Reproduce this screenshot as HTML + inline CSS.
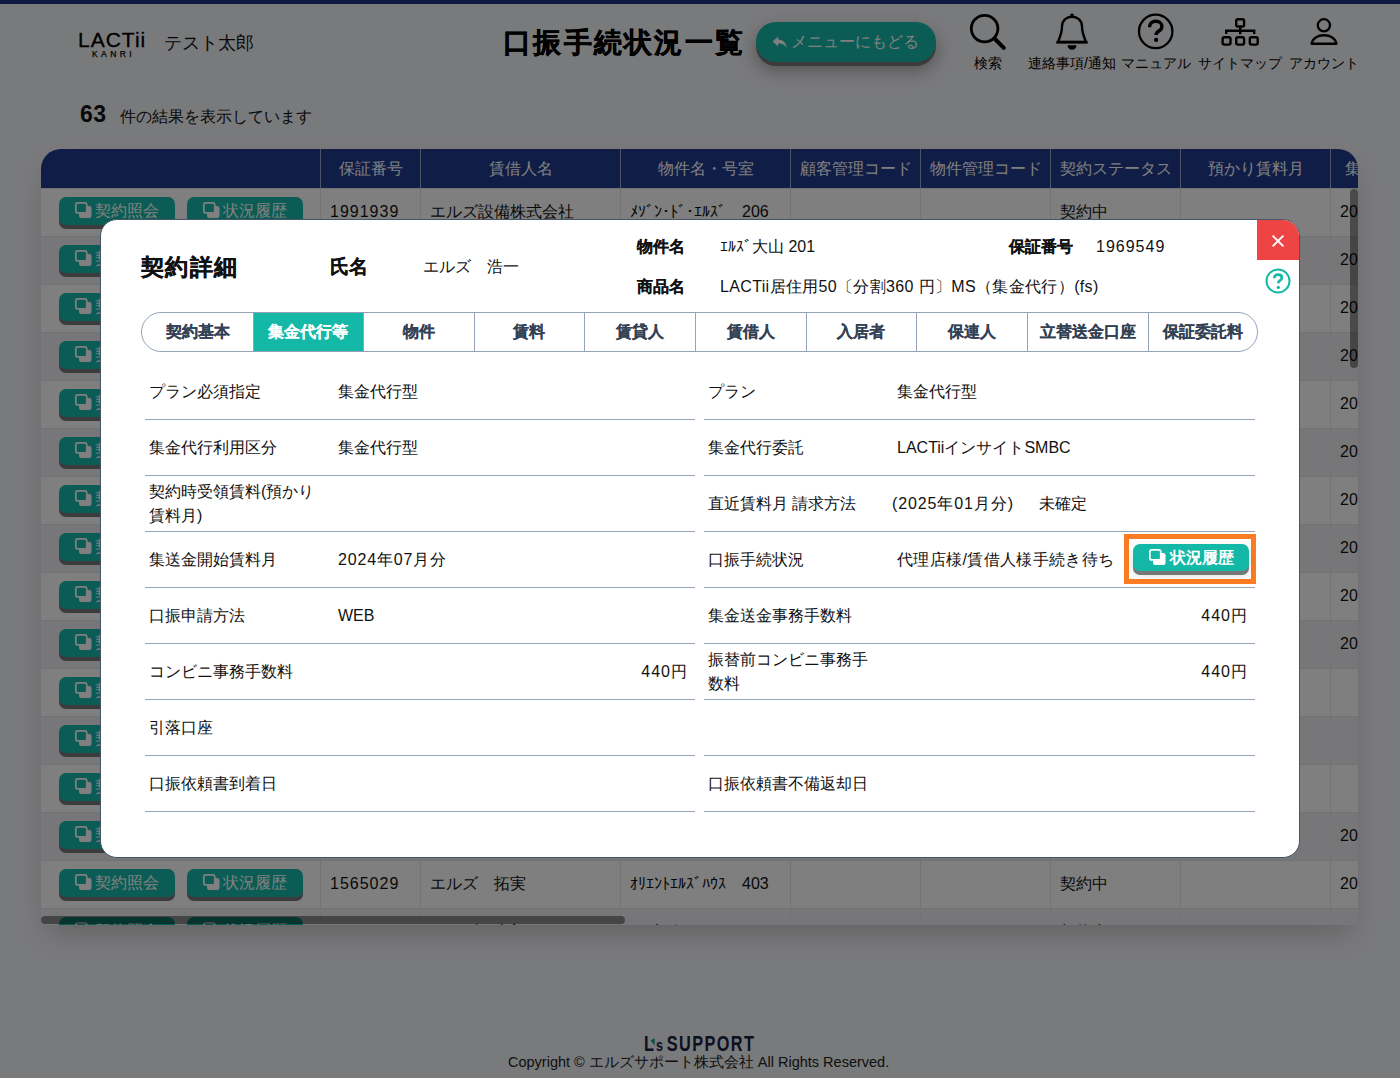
<!DOCTYPE html>
<html lang="ja">
<head>
<meta charset="utf-8">
<style>
*{box-sizing:border-box;margin:0;padding:0}
html,body{width:1400px;height:1078px;overflow:hidden}
body{font-family:"Liberation Sans",sans-serif;background:#f3f4f7;color:#111;position:relative;font-size:16px}
.abs{position:absolute;white-space:nowrap}
.topbar{position:absolute;left:0;top:0;width:1400px;height:4px;background:#1d347f}
.logo{left:78px;top:27px;font-size:21px;letter-spacing:1px;color:#000;line-height:26px;-webkit-text-stroke:.3px #000}
.logo2{left:92px;top:49px;font-size:8.5px;letter-spacing:3.4px;color:#000;line-height:10px;-webkit-text-stroke:.25px #000}
.uname{left:164px;top:31px;font-size:18px;line-height:24px}
.title{left:503px;top:24px;font-size:28px;letter-spacing:2.3px;font-weight:bold;line-height:38px;-webkit-text-stroke:.4px #000}
.backbtn{left:756px;top:22px;width:180px;height:40px;border-radius:20px;background:#15b9a8;color:#fff;box-shadow:0 4px 0 #777,0 8px 18px rgba(0,0,0,.35);font-size:16px;line-height:40px;padding-left:35px}
.hicon{position:absolute;top:12px;text-align:center;font-size:13.5px;line-height:16px;color:#000}
.hicon svg{display:block;margin:0 auto}
.hl{top:54px;font-size:14px;line-height:18px;text-align:center;color:#000}
.count{left:80px;top:99px;font-size:16px;line-height:30px}
.count b{font-size:23px;margin-right:9px;letter-spacing:.5px}
.twrap{position:absolute;left:41px;top:149px;width:1317px;height:776px;background:#fff;border-radius:20px 20px 0 0;overflow:hidden;box-shadow:0 14px 30px -8px rgba(0,0,0,.22);z-index:1}
.thead{position:absolute;left:0;top:0;width:1317px;height:39px;background:#1f3a8f;z-index:2}
.vscroll{position:absolute;left:1309px;top:40px;width:8px;height:179px;border-radius:4px;background:rgba(0,0,0,.42);z-index:3}
.hscroll{position:absolute;left:0;top:767px;width:584px;height:8px;border-radius:4px;background:rgba(0,0,0,.42);z-index:3}
.gbtn .ic{position:absolute;left:16px;top:5px}
.th{position:absolute;top:0;height:39px;line-height:39px;color:#fff;text-align:center;font-size:16px;border-left:1px solid #9aa6c8;overflow:hidden;white-space:nowrap}
.row{position:absolute;left:0;width:1317px;height:48px;background:#fff;border-top:1px solid #e3e4e8}
.row.alt{background:#eeeff2}
.cell.dg{letter-spacing:1px}
.cell{position:absolute;top:-1px;height:48px;line-height:48px;font-size:16px;border-left:1px solid #e6e6e6;padding-left:9px;white-space:nowrap;overflow:hidden}
.gbtn{position:absolute;top:8px;width:116px;height:28px;border-radius:7px;background:#15b9a8;color:#fff;box-shadow:0 4px 0 #777;font-size:16px;line-height:28px;padding-left:36px;white-space:nowrap}
.overlay{z-index:10;position:absolute;left:0;top:0;width:1400px;height:1078px;background:rgba(0,0,0,.5)}
.footer-logo{left:644px;top:1031px;font-size:22px;font-weight:bold;color:#1a2142;line-height:25px;transform:scaleX(.74);transform-origin:0 0;letter-spacing:1.9px}
.fl2{display:inline-block;width:0;height:0;border-left:3px solid transparent;border-right:3px solid transparent;border-top:7px solid #169e8c;position:relative;top:-5px;margin:0 0 0 -5px;transform:rotate(-20deg)}
.fl3{font-size:17px;margin-right:3px}
.copy{left:508px;top:1052px;font-size:14.5px;line-height:20px;color:#222}

.modal{position:absolute;left:100px;top:219px;width:1200px;height:639px;background:#fff;border:1px solid #475569;border-radius:17px;z-index:20;overflow:hidden}
.m{color:#111;white-space:nowrap}
.mt{font-size:23px;letter-spacing:1.3px;font-weight:bold;line-height:30px;-webkit-text-stroke:.3px #111}
.mh{font-size:19px;font-weight:bold;line-height:24px;-webkit-text-stroke:.2px #111}
.mv{font-size:16px;line-height:24px}
.mb{font-size:16px;font-weight:bold;line-height:24px;-webkit-text-stroke:.15px #111}
.close{position:absolute;right:0;top:0;width:42px;height:40px;background:#ef4444;display:flex;align-items:center;justify-content:center}
.help{position:absolute;width:26px;height:26px}
.help svg{display:block}
.tabs{position:absolute;height:40px;border:1px solid #94a3b8;border-radius:20px;overflow:hidden}
.tab{position:absolute;top:0;margin-left:-1px;height:38px;line-height:38px;text-align:center;font-size:16px;font-weight:bold;color:#334155;-webkit-text-stroke:.15px currentColor;border-left:1px solid #94a3b8}
.tab.first{border-left:none;margin-left:0}
.tab.on{background:#14b8a6;color:#fff}
.grow{position:absolute;height:56px;border-bottom:1px solid #94a3b8}
.gl{font-size:16px;line-height:24px}
.gl2{font-size:16px;line-height:24px;white-space:nowrap}
.obox{position:absolute;width:132px;height:50px;border:5px solid #fb7c23}
.mbtn{position:absolute;width:116px;height:27px;border-radius:7px;background:#14b8a6;color:#fff;box-shadow:0 4px 0 #777,0 4px 10px rgba(0,0,0,.15);font-size:16px;line-height:27px;padding-left:36.5px;white-space:nowrap;font-weight:bold}
.mbtn .ic{position:absolute;left:16px;top:5px}
</style>
</head>
<body>
<div class="topbar"></div>
<div class="abs logo">LACTii</div>
<div class="abs logo2">KANRI</div>
<div class="abs uname">テスト太郎</div>
<div class="abs title">口振手続状況一覧</div>
<div class="abs backbtn"><svg style="position:absolute;left:16px;top:14px" width="16" height="13" viewBox="0 0 16 13"><path d="M6.2 0.6L0.6 5.6L6.2 10.6V7.6C10.2 7.6 12.6 8.6 14.8 12.2C14.2 7.2 11.6 3.6 6.2 3.6Z" fill="#fff"/></svg>メニューにもどる</div>


<svg class="abs" style="left:960px;top:6px" width="60" height="50" viewBox="960 6 60 50"><circle cx="984.6" cy="28.6" r="13.3" fill="none" stroke="#000" stroke-width="2.8"/><path d="M994.5 38.5L1003.8 47.8" stroke="#000" stroke-width="4" stroke-linecap="round"/></svg>
<svg class="abs" style="left:1050px;top:6px" width="45" height="50" viewBox="1050 6 45 50"><path d="M1058 42C1060.5 36 1062 31 1062 26.5C1062 20.5 1066.5 16.8 1072 16.8C1077.5 16.8 1082 20.5 1082 26.5C1082 31 1083.5 36 1086 42Z" fill="none" stroke="#000" stroke-width="2.4" stroke-linejoin="miter"/><path d="M1056.5 42.2H1087.5" stroke="#000" stroke-width="2.6"/><circle cx="1072" cy="15.6" r="2" fill="#000"/><path d="M1067.5 45.3H1076.5A4.5 4.5 0 0 1 1067.5 45.3Z" fill="#000"/></svg>
<svg class="abs" style="left:1130px;top:6px" width="52" height="52" viewBox="1130 6 52 52"><circle cx="1155.7" cy="31.4" r="16.7" fill="none" stroke="#000" stroke-width="2.3"/><path d="M1149.6 27.2C1149.6 23.3 1152.2 21.3 1155.8 21.3C1159.4 21.3 1161.9 23.4 1161.9 26.4C1161.9 28.9 1160.5 30.1 1158.6 31.3C1157 32.3 1156.1 33 1156.1 35" fill="none" stroke="#000" stroke-width="3.4"/><circle cx="1156.1" cy="39.9" r="2.1" fill="#000"/></svg>
<svg class="abs" style="left:1215px;top:10px" width="50" height="42" viewBox="1215 10 50 42"><g fill="none" stroke="#000" stroke-width="2.4"><rect x="1236.2" y="19.2" width="7.9" height="7.3" rx="1.8"/><rect x="1222.6" y="37.2" width="7.9" height="7.4" rx="1.8"/><rect x="1236.2" y="37.2" width="7.9" height="7.4" rx="1.8"/><rect x="1249.8" y="37.2" width="7.9" height="7.4" rx="1.8"/><path d="M1240.2 26.5V34.2M1226.2 34V30.8H1254.2V34"/></g></svg>
<svg class="abs" style="left:1305px;top:12px" width="40" height="40" viewBox="1305 12 40 40"><circle cx="1323.9" cy="25.3" r="6.1" fill="none" stroke="#000" stroke-width="2.3"/><path d="M1311.6 43.8C1312.6 38.4 1317.6 35.2 1324 35.2C1330.4 35.2 1335.4 38.4 1336.4 43.8Z" fill="none" stroke="#000" stroke-width="2.4" stroke-linejoin="round"/></svg>
<div class="abs hl" style="left:948px;width:80px">検索</div>
<div class="abs hl" style="left:1022px;width:100px">連絡事項/通知</div>
<div class="abs hl" style="left:1106px;width:100px">マニュアル</div>
<div class="abs hl" style="left:1190px;width:100px">サイトマップ</div>
<div class="abs hl" style="left:1274px;width:100px">アカウント</div>

<div class="abs count"><b>63</b> 件の結果を表示しています</div>

<div class="twrap">
  <div class="thead">
<div class="th" style="left:279px;width:100px">保証番号</div>
<div class="th" style="left:379px;width:200px">賃借人名</div>
<div class="th" style="left:579px;width:170px">物件名・号室</div>
<div class="th" style="left:749px;width:130px">顧客管理コード</div>
<div class="th" style="left:879px;width:130px">物件管理コード</div>
<div class="th" style="left:1009px;width:130px">契約ステータス</div>
<div class="th" style="left:1139px;width:150px">預かり賃料月</div>
<div class="th" style="left:1289px;width:60px">集金</div>
</div>
<div class="row" style="top:39px">
<div class="gbtn" style="left:18px"><svg class="ic" width="18" height="18" viewBox="0 0 18 18"><rect x="4" y="4" width="12.5" height="12" rx="2.2" fill="#fff"/><rect x="0.85" y="0.85" width="10.9" height="10.1" rx="2" fill="#15b9a8" stroke="#fff" stroke-width="1.7"/></svg>契約照会</div>
<div class="gbtn" style="left:146px"><svg class="ic" width="18" height="18" viewBox="0 0 18 18"><rect x="4" y="4" width="12.5" height="12" rx="2.2" fill="#fff"/><rect x="0.85" y="0.85" width="10.9" height="10.1" rx="2" fill="#15b9a8" stroke="#fff" stroke-width="1.7"/></svg>状況履歴</div>
<div class="cell dg" style="left:279px;width:100px">1991939</div>
<div class="cell" style="left:379px;width:200px">エルズ設備株式会社</div>
<div class="cell hk" style="left:579px;width:170px">ﾒｿﾞﾝ･ﾄﾞ･ｴﾙｽﾞ　206</div>
<div class="cell" style="left:749px;width:130px"></div>
<div class="cell" style="left:879px;width:130px"></div>
<div class="cell" style="left:1009px;width:130px">契約中</div>
<div class="cell" style="left:1139px;width:150px"></div>
<div class="cell" style="left:1289px;width:60px">20</div>
</div>
<div class="row alt" style="top:87px">
<div class="gbtn" style="left:18px"><svg class="ic" width="18" height="18" viewBox="0 0 18 18"><rect x="4" y="4" width="12.5" height="12" rx="2.2" fill="#fff"/><rect x="0.85" y="0.85" width="10.9" height="10.1" rx="2" fill="#15b9a8" stroke="#fff" stroke-width="1.7"/></svg>契約照会</div>
<div class="gbtn" style="left:146px"><svg class="ic" width="18" height="18" viewBox="0 0 18 18"><rect x="4" y="4" width="12.5" height="12" rx="2.2" fill="#fff"/><rect x="0.85" y="0.85" width="10.9" height="10.1" rx="2" fill="#15b9a8" stroke="#fff" stroke-width="1.7"/></svg>状況履歴</div>
<div class="cell dg" style="left:279px;width:100px"></div>
<div class="cell" style="left:379px;width:200px"></div>
<div class="cell hk" style="left:579px;width:170px"></div>
<div class="cell" style="left:749px;width:130px"></div>
<div class="cell" style="left:879px;width:130px"></div>
<div class="cell" style="left:1009px;width:130px"></div>
<div class="cell" style="left:1139px;width:150px"></div>
<div class="cell" style="left:1289px;width:60px">20</div>
</div>
<div class="row" style="top:135px">
<div class="gbtn" style="left:18px"><svg class="ic" width="18" height="18" viewBox="0 0 18 18"><rect x="4" y="4" width="12.5" height="12" rx="2.2" fill="#fff"/><rect x="0.85" y="0.85" width="10.9" height="10.1" rx="2" fill="#15b9a8" stroke="#fff" stroke-width="1.7"/></svg>契約照会</div>
<div class="gbtn" style="left:146px"><svg class="ic" width="18" height="18" viewBox="0 0 18 18"><rect x="4" y="4" width="12.5" height="12" rx="2.2" fill="#fff"/><rect x="0.85" y="0.85" width="10.9" height="10.1" rx="2" fill="#15b9a8" stroke="#fff" stroke-width="1.7"/></svg>状況履歴</div>
<div class="cell dg" style="left:279px;width:100px"></div>
<div class="cell" style="left:379px;width:200px"></div>
<div class="cell hk" style="left:579px;width:170px"></div>
<div class="cell" style="left:749px;width:130px"></div>
<div class="cell" style="left:879px;width:130px"></div>
<div class="cell" style="left:1009px;width:130px"></div>
<div class="cell" style="left:1139px;width:150px"></div>
<div class="cell" style="left:1289px;width:60px">20</div>
</div>
<div class="row alt" style="top:183px">
<div class="gbtn" style="left:18px"><svg class="ic" width="18" height="18" viewBox="0 0 18 18"><rect x="4" y="4" width="12.5" height="12" rx="2.2" fill="#fff"/><rect x="0.85" y="0.85" width="10.9" height="10.1" rx="2" fill="#15b9a8" stroke="#fff" stroke-width="1.7"/></svg>契約照会</div>
<div class="gbtn" style="left:146px"><svg class="ic" width="18" height="18" viewBox="0 0 18 18"><rect x="4" y="4" width="12.5" height="12" rx="2.2" fill="#fff"/><rect x="0.85" y="0.85" width="10.9" height="10.1" rx="2" fill="#15b9a8" stroke="#fff" stroke-width="1.7"/></svg>状況履歴</div>
<div class="cell dg" style="left:279px;width:100px"></div>
<div class="cell" style="left:379px;width:200px"></div>
<div class="cell hk" style="left:579px;width:170px"></div>
<div class="cell" style="left:749px;width:130px"></div>
<div class="cell" style="left:879px;width:130px"></div>
<div class="cell" style="left:1009px;width:130px"></div>
<div class="cell" style="left:1139px;width:150px"></div>
<div class="cell" style="left:1289px;width:60px">20</div>
</div>
<div class="row" style="top:231px">
<div class="gbtn" style="left:18px"><svg class="ic" width="18" height="18" viewBox="0 0 18 18"><rect x="4" y="4" width="12.5" height="12" rx="2.2" fill="#fff"/><rect x="0.85" y="0.85" width="10.9" height="10.1" rx="2" fill="#15b9a8" stroke="#fff" stroke-width="1.7"/></svg>契約照会</div>
<div class="gbtn" style="left:146px"><svg class="ic" width="18" height="18" viewBox="0 0 18 18"><rect x="4" y="4" width="12.5" height="12" rx="2.2" fill="#fff"/><rect x="0.85" y="0.85" width="10.9" height="10.1" rx="2" fill="#15b9a8" stroke="#fff" stroke-width="1.7"/></svg>状況履歴</div>
<div class="cell dg" style="left:279px;width:100px"></div>
<div class="cell" style="left:379px;width:200px"></div>
<div class="cell hk" style="left:579px;width:170px"></div>
<div class="cell" style="left:749px;width:130px"></div>
<div class="cell" style="left:879px;width:130px"></div>
<div class="cell" style="left:1009px;width:130px"></div>
<div class="cell" style="left:1139px;width:150px"></div>
<div class="cell" style="left:1289px;width:60px">20</div>
</div>
<div class="row alt" style="top:279px">
<div class="gbtn" style="left:18px"><svg class="ic" width="18" height="18" viewBox="0 0 18 18"><rect x="4" y="4" width="12.5" height="12" rx="2.2" fill="#fff"/><rect x="0.85" y="0.85" width="10.9" height="10.1" rx="2" fill="#15b9a8" stroke="#fff" stroke-width="1.7"/></svg>契約照会</div>
<div class="gbtn" style="left:146px"><svg class="ic" width="18" height="18" viewBox="0 0 18 18"><rect x="4" y="4" width="12.5" height="12" rx="2.2" fill="#fff"/><rect x="0.85" y="0.85" width="10.9" height="10.1" rx="2" fill="#15b9a8" stroke="#fff" stroke-width="1.7"/></svg>状況履歴</div>
<div class="cell dg" style="left:279px;width:100px"></div>
<div class="cell" style="left:379px;width:200px"></div>
<div class="cell hk" style="left:579px;width:170px"></div>
<div class="cell" style="left:749px;width:130px"></div>
<div class="cell" style="left:879px;width:130px"></div>
<div class="cell" style="left:1009px;width:130px"></div>
<div class="cell" style="left:1139px;width:150px"></div>
<div class="cell" style="left:1289px;width:60px">20</div>
</div>
<div class="row" style="top:327px">
<div class="gbtn" style="left:18px"><svg class="ic" width="18" height="18" viewBox="0 0 18 18"><rect x="4" y="4" width="12.5" height="12" rx="2.2" fill="#fff"/><rect x="0.85" y="0.85" width="10.9" height="10.1" rx="2" fill="#15b9a8" stroke="#fff" stroke-width="1.7"/></svg>契約照会</div>
<div class="gbtn" style="left:146px"><svg class="ic" width="18" height="18" viewBox="0 0 18 18"><rect x="4" y="4" width="12.5" height="12" rx="2.2" fill="#fff"/><rect x="0.85" y="0.85" width="10.9" height="10.1" rx="2" fill="#15b9a8" stroke="#fff" stroke-width="1.7"/></svg>状況履歴</div>
<div class="cell dg" style="left:279px;width:100px"></div>
<div class="cell" style="left:379px;width:200px"></div>
<div class="cell hk" style="left:579px;width:170px"></div>
<div class="cell" style="left:749px;width:130px"></div>
<div class="cell" style="left:879px;width:130px"></div>
<div class="cell" style="left:1009px;width:130px"></div>
<div class="cell" style="left:1139px;width:150px"></div>
<div class="cell" style="left:1289px;width:60px">20</div>
</div>
<div class="row alt" style="top:375px">
<div class="gbtn" style="left:18px"><svg class="ic" width="18" height="18" viewBox="0 0 18 18"><rect x="4" y="4" width="12.5" height="12" rx="2.2" fill="#fff"/><rect x="0.85" y="0.85" width="10.9" height="10.1" rx="2" fill="#15b9a8" stroke="#fff" stroke-width="1.7"/></svg>契約照会</div>
<div class="gbtn" style="left:146px"><svg class="ic" width="18" height="18" viewBox="0 0 18 18"><rect x="4" y="4" width="12.5" height="12" rx="2.2" fill="#fff"/><rect x="0.85" y="0.85" width="10.9" height="10.1" rx="2" fill="#15b9a8" stroke="#fff" stroke-width="1.7"/></svg>状況履歴</div>
<div class="cell dg" style="left:279px;width:100px"></div>
<div class="cell" style="left:379px;width:200px"></div>
<div class="cell hk" style="left:579px;width:170px"></div>
<div class="cell" style="left:749px;width:130px"></div>
<div class="cell" style="left:879px;width:130px"></div>
<div class="cell" style="left:1009px;width:130px"></div>
<div class="cell" style="left:1139px;width:150px"></div>
<div class="cell" style="left:1289px;width:60px">20</div>
</div>
<div class="row" style="top:423px">
<div class="gbtn" style="left:18px"><svg class="ic" width="18" height="18" viewBox="0 0 18 18"><rect x="4" y="4" width="12.5" height="12" rx="2.2" fill="#fff"/><rect x="0.85" y="0.85" width="10.9" height="10.1" rx="2" fill="#15b9a8" stroke="#fff" stroke-width="1.7"/></svg>契約照会</div>
<div class="gbtn" style="left:146px"><svg class="ic" width="18" height="18" viewBox="0 0 18 18"><rect x="4" y="4" width="12.5" height="12" rx="2.2" fill="#fff"/><rect x="0.85" y="0.85" width="10.9" height="10.1" rx="2" fill="#15b9a8" stroke="#fff" stroke-width="1.7"/></svg>状況履歴</div>
<div class="cell dg" style="left:279px;width:100px"></div>
<div class="cell" style="left:379px;width:200px"></div>
<div class="cell hk" style="left:579px;width:170px"></div>
<div class="cell" style="left:749px;width:130px"></div>
<div class="cell" style="left:879px;width:130px"></div>
<div class="cell" style="left:1009px;width:130px"></div>
<div class="cell" style="left:1139px;width:150px"></div>
<div class="cell" style="left:1289px;width:60px">20</div>
</div>
<div class="row alt" style="top:471px">
<div class="gbtn" style="left:18px"><svg class="ic" width="18" height="18" viewBox="0 0 18 18"><rect x="4" y="4" width="12.5" height="12" rx="2.2" fill="#fff"/><rect x="0.85" y="0.85" width="10.9" height="10.1" rx="2" fill="#15b9a8" stroke="#fff" stroke-width="1.7"/></svg>契約照会</div>
<div class="gbtn" style="left:146px"><svg class="ic" width="18" height="18" viewBox="0 0 18 18"><rect x="4" y="4" width="12.5" height="12" rx="2.2" fill="#fff"/><rect x="0.85" y="0.85" width="10.9" height="10.1" rx="2" fill="#15b9a8" stroke="#fff" stroke-width="1.7"/></svg>状況履歴</div>
<div class="cell dg" style="left:279px;width:100px"></div>
<div class="cell" style="left:379px;width:200px"></div>
<div class="cell hk" style="left:579px;width:170px"></div>
<div class="cell" style="left:749px;width:130px"></div>
<div class="cell" style="left:879px;width:130px"></div>
<div class="cell" style="left:1009px;width:130px"></div>
<div class="cell" style="left:1139px;width:150px"></div>
<div class="cell" style="left:1289px;width:60px">20</div>
</div>
<div class="row" style="top:519px">
<div class="gbtn" style="left:18px"><svg class="ic" width="18" height="18" viewBox="0 0 18 18"><rect x="4" y="4" width="12.5" height="12" rx="2.2" fill="#fff"/><rect x="0.85" y="0.85" width="10.9" height="10.1" rx="2" fill="#15b9a8" stroke="#fff" stroke-width="1.7"/></svg>契約照会</div>
<div class="gbtn" style="left:146px"><svg class="ic" width="18" height="18" viewBox="0 0 18 18"><rect x="4" y="4" width="12.5" height="12" rx="2.2" fill="#fff"/><rect x="0.85" y="0.85" width="10.9" height="10.1" rx="2" fill="#15b9a8" stroke="#fff" stroke-width="1.7"/></svg>状況履歴</div>
<div class="cell dg" style="left:279px;width:100px"></div>
<div class="cell" style="left:379px;width:200px"></div>
<div class="cell hk" style="left:579px;width:170px"></div>
<div class="cell" style="left:749px;width:130px"></div>
<div class="cell" style="left:879px;width:130px"></div>
<div class="cell" style="left:1009px;width:130px"></div>
<div class="cell" style="left:1139px;width:150px"></div>
<div class="cell" style="left:1289px;width:60px"></div>
</div>
<div class="row alt" style="top:567px">
<div class="gbtn" style="left:18px"><svg class="ic" width="18" height="18" viewBox="0 0 18 18"><rect x="4" y="4" width="12.5" height="12" rx="2.2" fill="#fff"/><rect x="0.85" y="0.85" width="10.9" height="10.1" rx="2" fill="#15b9a8" stroke="#fff" stroke-width="1.7"/></svg>契約照会</div>
<div class="gbtn" style="left:146px"><svg class="ic" width="18" height="18" viewBox="0 0 18 18"><rect x="4" y="4" width="12.5" height="12" rx="2.2" fill="#fff"/><rect x="0.85" y="0.85" width="10.9" height="10.1" rx="2" fill="#15b9a8" stroke="#fff" stroke-width="1.7"/></svg>状況履歴</div>
<div class="cell dg" style="left:279px;width:100px"></div>
<div class="cell" style="left:379px;width:200px"></div>
<div class="cell hk" style="left:579px;width:170px"></div>
<div class="cell" style="left:749px;width:130px"></div>
<div class="cell" style="left:879px;width:130px"></div>
<div class="cell" style="left:1009px;width:130px"></div>
<div class="cell" style="left:1139px;width:150px"></div>
<div class="cell" style="left:1289px;width:60px"></div>
</div>
<div class="row" style="top:615px">
<div class="gbtn" style="left:18px"><svg class="ic" width="18" height="18" viewBox="0 0 18 18"><rect x="4" y="4" width="12.5" height="12" rx="2.2" fill="#fff"/><rect x="0.85" y="0.85" width="10.9" height="10.1" rx="2" fill="#15b9a8" stroke="#fff" stroke-width="1.7"/></svg>契約照会</div>
<div class="gbtn" style="left:146px"><svg class="ic" width="18" height="18" viewBox="0 0 18 18"><rect x="4" y="4" width="12.5" height="12" rx="2.2" fill="#fff"/><rect x="0.85" y="0.85" width="10.9" height="10.1" rx="2" fill="#15b9a8" stroke="#fff" stroke-width="1.7"/></svg>状況履歴</div>
<div class="cell dg" style="left:279px;width:100px"></div>
<div class="cell" style="left:379px;width:200px"></div>
<div class="cell hk" style="left:579px;width:170px"></div>
<div class="cell" style="left:749px;width:130px"></div>
<div class="cell" style="left:879px;width:130px"></div>
<div class="cell" style="left:1009px;width:130px"></div>
<div class="cell" style="left:1139px;width:150px"></div>
<div class="cell" style="left:1289px;width:60px"></div>
</div>
<div class="row alt" style="top:663px">
<div class="gbtn" style="left:18px"><svg class="ic" width="18" height="18" viewBox="0 0 18 18"><rect x="4" y="4" width="12.5" height="12" rx="2.2" fill="#fff"/><rect x="0.85" y="0.85" width="10.9" height="10.1" rx="2" fill="#15b9a8" stroke="#fff" stroke-width="1.7"/></svg>契約照会</div>
<div class="gbtn" style="left:146px"><svg class="ic" width="18" height="18" viewBox="0 0 18 18"><rect x="4" y="4" width="12.5" height="12" rx="2.2" fill="#fff"/><rect x="0.85" y="0.85" width="10.9" height="10.1" rx="2" fill="#15b9a8" stroke="#fff" stroke-width="1.7"/></svg>状況履歴</div>
<div class="cell dg" style="left:279px;width:100px"></div>
<div class="cell" style="left:379px;width:200px"></div>
<div class="cell hk" style="left:579px;width:170px"></div>
<div class="cell" style="left:749px;width:130px"></div>
<div class="cell" style="left:879px;width:130px"></div>
<div class="cell" style="left:1009px;width:130px"></div>
<div class="cell" style="left:1139px;width:150px"></div>
<div class="cell" style="left:1289px;width:60px">20</div>
</div>
<div class="row" style="top:711px">
<div class="gbtn" style="left:18px"><svg class="ic" width="18" height="18" viewBox="0 0 18 18"><rect x="4" y="4" width="12.5" height="12" rx="2.2" fill="#fff"/><rect x="0.85" y="0.85" width="10.9" height="10.1" rx="2" fill="#15b9a8" stroke="#fff" stroke-width="1.7"/></svg>契約照会</div>
<div class="gbtn" style="left:146px"><svg class="ic" width="18" height="18" viewBox="0 0 18 18"><rect x="4" y="4" width="12.5" height="12" rx="2.2" fill="#fff"/><rect x="0.85" y="0.85" width="10.9" height="10.1" rx="2" fill="#15b9a8" stroke="#fff" stroke-width="1.7"/></svg>状況履歴</div>
<div class="cell dg" style="left:279px;width:100px">1565029</div>
<div class="cell" style="left:379px;width:200px">エルズ　拓実</div>
<div class="cell hk" style="left:579px;width:170px">ｵﾘｴﾝﾄｴﾙｽﾞﾊｳｽ　403</div>
<div class="cell" style="left:749px;width:130px"></div>
<div class="cell" style="left:879px;width:130px"></div>
<div class="cell" style="left:1009px;width:130px">契約中</div>
<div class="cell" style="left:1139px;width:150px"></div>
<div class="cell" style="left:1289px;width:60px">20</div>
</div>
<div class="row alt" style="top:759px">
<div class="gbtn" style="left:18px"><svg class="ic" width="18" height="18" viewBox="0 0 18 18"><rect x="4" y="4" width="12.5" height="12" rx="2.2" fill="#fff"/><rect x="0.85" y="0.85" width="10.9" height="10.1" rx="2" fill="#15b9a8" stroke="#fff" stroke-width="1.7"/></svg>契約照会</div>
<div class="gbtn" style="left:146px"><svg class="ic" width="18" height="18" viewBox="0 0 18 18"><rect x="4" y="4" width="12.5" height="12" rx="2.2" fill="#fff"/><rect x="0.85" y="0.85" width="10.9" height="10.1" rx="2" fill="#15b9a8" stroke="#fff" stroke-width="1.7"/></svg>状況履歴</div>
<div class="cell dg" style="left:279px;width:100px">1565028</div>
<div class="cell" style="left:379px;width:200px">エルズ　太郎</div>
<div class="cell hk" style="left:579px;width:170px">ｴﾙｽﾞﾊｲﾂ　101</div>
<div class="cell" style="left:749px;width:130px"></div>
<div class="cell" style="left:879px;width:130px"></div>
<div class="cell" style="left:1009px;width:130px">契約中</div>
<div class="cell" style="left:1139px;width:150px"></div>
<div class="cell" style="left:1289px;width:60px">20</div>
</div>
<div class="vscroll"></div><div class="hscroll"></div>
</div>

<div class="abs footer-logo"><span class="fl1">L</span><span class="fl2"></span><span class="fl3">s</span><span class="fl4">SUPPORT</span></div>
<div class="abs copy">Copyright © エルズサポート株式会社 All Rights Reserved.</div>

<div class="overlay"></div>
<div class="modal">
<div class="close"><svg width="14" height="14" viewBox="0 0 14 14" style="margin-top:2px"><path d="M1.6 1.6L12.4 12.4M12.4 1.6L1.6 12.4" stroke="#fff" stroke-width="1.9" stroke-linecap="butt"/></svg></div>
<div class="help" style="left:1164px;top:48px"><svg width="26" height="26" viewBox="0 0 26 26"><circle cx="13" cy="13" r="11.5" fill="none" stroke="#14b8a6" stroke-width="2"/><path d="M9.3 10.2c0-2.3 1.6-3.6 3.8-3.6 2.2 0 3.7 1.3 3.7 3.1 0 1.5-.8 2.3-2 3-1 .6-1.4 1-1.4 2v.6" fill="none" stroke="#14b8a6" stroke-width="2.7"/><circle cx="13.3" cy="19.4" r="1.6" fill="#14b8a6"/></svg></div>
<div class="m abs mt" style="left:40px;top:32px">契約詳細</div>
<div class="m abs mh" style="left:229px;top:35px">氏名</div>
<div class="m abs mv" style="left:322px;top:35px">エルズ　浩一</div>
<div class="m abs mb" style="left:536px;top:15px">物件名</div>
<div class="m abs mv" style="left:619px;top:15px"><span class="hk">ｴﾙｽﾞ</span>大山 201</div>
<div class="m abs mb" style="left:908px;top:15px">保証番号</div>
<div class="m abs mv" style="left:995px;top:15px;letter-spacing:1px">1969549</div>
<div class="m abs mb" style="left:536px;top:55px">商品名</div>
<div class="m abs mv" style="left:619px;top:55px;letter-spacing:.35px">LACTii居住用50〔分割360 円〕MS（集金代行）(fs)</div>
<div class="tabs" style="left:40px;top:92px;width:1117px">
<div class="tab first" style="left:0px;width:111.5px">契約基本</div>
<div class="tab on" style="left:111.5px;width:110.5px">集金代行等</div>
<div class="tab" style="left:222px;width:110.5px">物件</div>
<div class="tab" style="left:332.5px;width:110.5px">賃料</div>
<div class="tab" style="left:443px;width:111px">賃貸人</div>
<div class="tab" style="left:554px;width:110.5px">賃借人</div>
<div class="tab" style="left:664.5px;width:110.5px">入居者</div>
<div class="tab" style="left:775px;width:111px">保連人</div>
<div class="tab" style="left:886px;width:120.5px">立替送金口座</div>
<div class="tab last" style="left:1006.5px;width:110.5px">保証委託料</div>
</div>
<div class="grow" style="left:44px;top:144px;width:550px"></div>
<div class="m abs gl" style="left:48px;top:160px">プラン必須指定</div>
<div class="m abs gl" style="left:237px;top:160px;letter-spacing:0">集金代行型</div>
<div class="grow" style="left:44px;top:200px;width:550px"></div>
<div class="m abs gl" style="left:48px;top:216px">集金代行利用区分</div>
<div class="m abs gl" style="left:237px;top:216px;letter-spacing:0">集金代行型</div>
<div class="grow" style="left:44px;top:256px;width:550px"></div>
<div class="m abs gl2" style="left:48px;top:260px">契約時受領賃料(預かり<br>賃料月)</div>
<div class="grow" style="left:44px;top:312px;width:550px"></div>
<div class="m abs gl" style="left:48px;top:328px">集送金開始賃料月</div>
<div class="m abs gl" style="left:237px;top:328px;letter-spacing:.85px">2024年07月分</div>
<div class="grow" style="left:44px;top:368px;width:550px"></div>
<div class="m abs gl" style="left:48px;top:384px">口振申請方法</div>
<div class="m abs gl" style="left:237px;top:384px;letter-spacing:0">WEB</div>
<div class="grow" style="left:44px;top:424px;width:550px"></div>
<div class="m abs gl" style="left:48px;top:440px">コンビニ事務手数料</div>
<div class="m abs gl" style="right:611px;top:440px;letter-spacing:1px">440円</div>
<div class="grow" style="left:44px;top:480px;width:550px"></div>
<div class="m abs gl" style="left:48px;top:496px">引落口座</div>
<div class="grow" style="left:44px;top:536px;width:550px"></div>
<div class="m abs gl" style="left:48px;top:552px">口振依頼書到着日</div>
<div class="grow" style="left:603px;top:144px;width:551px"></div>
<div class="m abs gl" style="left:607px;top:160px">プラン</div>
<div class="m abs gl" style="left:796px;top:160px;letter-spacing:0">集金代行型</div>
<div class="grow" style="left:603px;top:200px;width:551px"></div>
<div class="m abs gl" style="left:607px;top:216px">集金代行委託</div>
<div class="m abs gl" style="left:796px;top:216px;letter-spacing:0">LACTiiインサイトSMBC</div>
<div class="grow" style="left:603px;top:256px;width:551px"></div>
<div class="m abs gl" style="left:607px;top:272px">直近賃料月 請求方法</div>
<div class="grow" style="left:603px;top:312px;width:551px"></div>
<div class="m abs gl" style="left:607px;top:328px">口振手続状況</div>
<div class="m abs gl" style="left:796px;top:328px;letter-spacing:.35px">代理店様/賃借人様手続き待ち</div>
<div class="grow" style="left:603px;top:368px;width:551px"></div>
<div class="m abs gl" style="left:607px;top:384px">集金送金事務手数料</div>
<div class="m abs gl" style="right:51px;top:384px;letter-spacing:1px">440円</div>
<div class="grow" style="left:603px;top:424px;width:551px"></div>
<div class="m abs gl2" style="left:607px;top:428px">振替前コンビニ事務手<br>数料</div>
<div class="m abs gl" style="right:51px;top:440px;letter-spacing:1px">440円</div>
<div class="grow" style="left:603px;top:480px;width:551px"></div>
<div class="grow" style="left:603px;top:536px;width:551px"></div>
<div class="m abs gl" style="left:607px;top:552px">口振依頼書不備返却日</div>
<div class="m abs gl" style="left:791px;top:272px;letter-spacing:.9px">(2025年01月分)</div>
<div class="m abs gl" style="left:938px;top:272px">未確定</div>
<div class="obox" style="left:1023px;top:314px"></div>
<div class="mbtn" style="left:1032px;top:324px"><svg class="ic" width="18" height="18" viewBox="0 0 18 18"><rect x="4" y="4" width="12.5" height="12" rx="2.2" fill="#fff"/><rect x="0.85" y="0.85" width="10.9" height="10.1" rx="2" fill="#14b8a6" stroke="#fff" stroke-width="1.7"/></svg>状況履歴</div>
</div>
</body>
</html>
